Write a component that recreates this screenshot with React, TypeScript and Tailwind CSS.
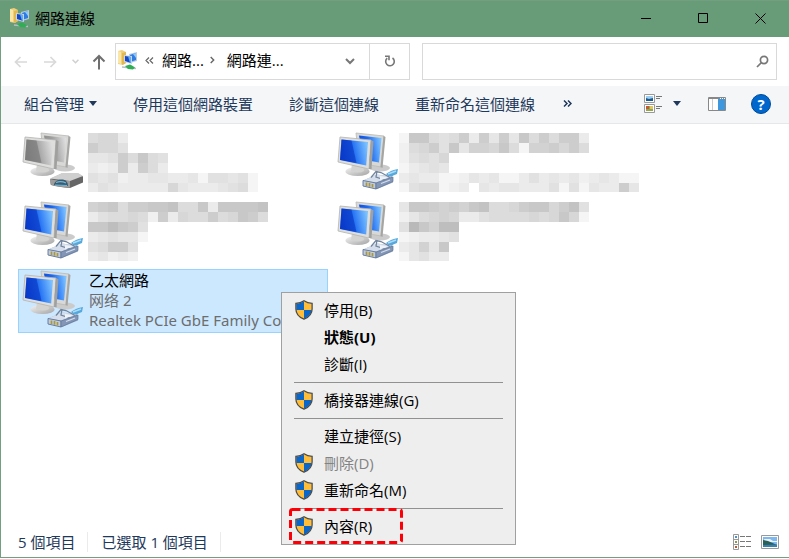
import type { ReactNode } from 'react'

type Connection = {
  id: string
  icon: 'modem' | 'ethernet'
  rows: string[]
  wide?: boolean
}

// Each character is the brightness of one 10px block.
const connections: Connection[] = [
  {
    id: 'a',
    icon: 'modem',
    rows: ['877b', '5779', 'aa958489', 'bcb5b58b', '9a9cbbaabbad99a9d', 'b9abbbbb7abbba98d'],
  },
  {
    id: 'b',
    icon: 'ethernet',
    wide: true,
    rows: ['d448985b5a5a485855b', 'c87594a66748d665758', 'c9897', 'dba9a', 'babbddcabaddb9babacbabdd', 'd988dcbfabaabbb9d9dabb5a'],
  },
  {
    id: 'c',
    icon: 'ethernet',
    rows: ['654855443884b44443', 'b98878c5b788587458', '442459', 'ba9aad', '98559', 'bacbc'],
  },
  {
    id: 'd',
    icon: 'ethernet',
    wide: true,
    rows: ['a445656438875447539', 'ca8767bb9888878747d', '914622', 'dcbba9', 'ba6a4', 'da9bb'],
  },
]

type MenuEntry = { label: string; shield?: boolean; bold?: boolean; disabled?: boolean }

const menuGroups: MenuEntry[][] = [
  [
    { label: '停用(B)', shield: true },
    { label: '狀態(U)', bold: true },
    { label: '診斷(I)' },
  ],
  [{ label: '橋接器連線(G)', shield: true }],
  [
    { label: '建立捷徑(S)' },
    { label: '刪除(D)', shield: true, disabled: true },
    { label: '重新命名(M)', shield: true },
  ],
  [{ label: '內容(R)', shield: true }],
]

function NetworkFolderIcon() {
  return (
    <svg viewBox="0 0 20 20" className="h-5 w-5 shrink-0">
      <path d="M0 1l4-1 4 2v11l-3 2-5-1z" fill="#efcf7c" />
      <path d="M0 1l3 1v12l-3-1z" fill="#fae6a8" />
      <path d="M4 3l4-1v11l-4 2z" fill="#e2b850" />
      <path d="M11 4l8-2v9l-7 2z" fill="#bccbdc" />
      <path d="M12 5l6-2v7l-6 2z" fill="#2f7be0" />
      <path d="M15 4l3-1v5z" fill="#8cc8ff" />
      <path d="M6 5l8 1v8l-8-2z" fill="#ccd6e2" />
      <path d="M7 6l6 1v6l-6-2z" fill="#1747c4" />
      <path d="M10 6.500l3 .5v6l-1-.3z" fill="#58b0ff" />
      <path d="M4 17l14 1.500" stroke="#b5bdc4" strokeWidth="1.500" />
      <path d="M7 16l5-1.500 2 1 3 2-2 2-5-.5z" fill="#2fae55" />
    </svg>
  )
}

function ShieldIcon() {
  return (
    <svg viewBox="0 0 18 20" className="h-5 w-[18px]">
      <path d="M9 1.200C6.500 2.900 4 3.500 1.300 3.600V10H9z" fill="#0a66c8" />
      <path d="M9 1.200c2.500 1.700 5 2.300 7.700 2.400V10H9z" fill="#ffbd38" />
      <path d="M1.300 10c.4 4 3.400 7 7.700 8.800V10z" fill="#ffbd38" />
      <path d="M16.700 10c-.4 4-3.400 7-7.700 8.800V10z" fill="#0a66c8" />
      <path d="M9 .8C6.500 2.500 3.800 3.200.9 3.300V9c0 4.800 3.100 8.200 8.100 10.200 5-2 8.100-5.400 8.100-10.200V3.300C14.200 3.200 11.500 2.500 9 .8z" fill="none" stroke="#4d4b45" strokeWidth="1.300" />
    </svg>
  )
}

function ConnectionIcon({ kind }: { kind: Connection['icon'] }) {
  const gray = kind === 'modem'
  const id = `screen-${kind}`
  return (
    <svg viewBox="0 1 62 62" className="h-[62px] w-[62px] shrink-0">
      <defs>
        <linearGradient id={id} x1="0" y1="0.600" x2="1" y2="0.400">
          <stop offset="0" stopColor={gray ? '#8b8b8b' : '#0b48dc'} />
          <stop offset="0.450" stopColor={gray ? '#a0a0a0' : '#1a68f2'} />
          <stop offset="1" stopColor={gray ? '#dedede' : '#7cc2ff'} />
        </linearGradient>
        <linearGradient id={`${id}-stand`} x1="0" y1="0" x2="1" y2="1">
          <stop offset="0" stopColor="#f4f4f4" />
          <stop offset="1" stopColor="#a2a2a2" />
        </linearGradient>
      </defs>
      <ellipse cx="43" cy="37" rx="10" ry="3.500" fill="#cbcbcb" />
      <path d="M19 2l28 3-3 31-22-4z" fill="#d8d8d6" stroke="#b9b9b7" strokeWidth=".8" />
      <path d="M22 4.500l22.500 2.500-2.500 24.500-16-3z" fill={`url(#${id})`} />
      <path d="M46.500 5l2 1-3 31-2-1z" fill="#a5a5a3" />
      <ellipse cx="20.500" cy="40.500" rx="12" ry="4.500" fill={`url(#${id}-stand)`} />
      <path d="M15 33l11 2 1 5q-6 3-13 0z" fill="#d3d3d2" />
      <path d="M3 6l31 3-2 29L1 31z" fill="#dededc" stroke="#b3b3b1" strokeWidth=".8" />
      <path d="M4.500 8.500l26.500 2.500-1.800 23.500L3 29z" fill={`url(#${id})`} />
      <path d="M4.500 8.500l10 1 5 22.500L3 28.700z" fill={gray ? '#6c6c6c' : '#0528b4'} opacity=".5" />
      <path d="M34 9l2.500 1.200-2 28.300-2.500-.5z" fill="#a0a09e" />
      {gray ? (
        <>
          <path d="M28 48l12-5.500h16l5 3v6l-13 5.500q-12-1-19-3z" fill="#666" />
          <path d="M28 47.500l12-5.500h16l5 3-13 5z" fill="#cfcfcf" />
          <path d="M28 48q8 2 20 2v6.500q-12-.5-19.500-3z" fill="#9d9d9d" />
          <path d="M32 53q2-5 9-4.500 5 1 5 6.500l-14-1z" fill="#3e5a6d" />
          <path d="M34 51.500q5-2 10 .5M33 54l12 .5" stroke="#6fb9dc" strokeWidth="1.200" fill="none" />
        </>
      ) : (
        <>
          <path d="M49 43q5-4 12-5l-1 5q-4 1-7 4z" fill="#57a9dc" />
          <path d="M51 43l8-3" stroke="#a9dcfb" strokeWidth="1.500" />
          <path d="M26 49.500l14-6 15 2 1 6L40 58l-14-3z" fill="#a3b3cc" />
          <path d="M26 49.500l14-6 14 2L39 51.500z" fill="#d5deea" />
          <path d="M26 49.500l13 2.500v6l-13-3z" fill="#c0cbdc" stroke="#5f7598" strokeWidth=".9" />
          <path d="M39 52l17-6v4.500L39 58z" fill="#8396b6" stroke="#5f7598" strokeWidth=".7" />
          <path d="M34 46.500l5-6 5 1 9 5M40 40l-1 6 9 3" fill="none" stroke="#72859f" strokeWidth="1.300" />
          <path d="M43 45l8 1.500-8 3z" fill="#eef3f8" />
          <path d="M44 52.500l9-3.500" stroke="#d5deea" strokeWidth="1.200" />
          <path d="M29.500 51.500v3.500M32.500 52v3.700M35.500 53v3.500" stroke="#ab983c" strokeWidth="1.700" />
        </>
      )}
    </svg>
  )
}

function Mosaic({ rows }: { rows: string[] }) {
  const width = Math.max(...rows.map((r) => r.length)) * 10
  return (
    <svg width={width} height="59" className="mt-px shrink-0" shapeRendering="crispEdges">
      {rows.flatMap((row, y) =>
        [...row].map((c, x) => {
          const v = 180 + parseInt(c, 16) * 5
          return <rect key={`${x}-${y}`} x={x * 10} y={y * 10} width="10" height="10" fill={`rgb(${v},${v},${v})`} />
        }),
      )}
    </svg>
  )
}

function Triangle() {
  return (
    <svg viewBox="0 0 8 5" className="h-[5px] w-2">
      <path d="M0 0h8L4 5z" fill="#1e395b" />
    </svg>
  )
}

function WindowButton({ label, children }: { label: string; children: ReactNode }) {
  return (
    <button aria-label={label} className="flex w-[57px] items-center justify-center">
      <svg viewBox="0 0 11 11" className="h-[11px] w-[11px]" fill="none" stroke="#000">
        {children}
      </svg>
    </button>
  )
}

function ContextMenu() {
  return (
    <div role="menu" className="absolute top-[292px] left-[281px] w-[235px] border border-[#a0a0a0] bg-[#eeeeee] py-1">
      {menuGroups.map((group, i) => (
        <div key={i}>
          {i > 0 && <div className="mx-3 my-1 h-px bg-[#919191]" />}
          {group.map((item) => (
            <button
              key={item.label}
              role="menuitem"
              disabled={item.disabled}
              className={`flex h-[27px] w-full items-center pb-[2px] pl-[13px] ${item.bold ? 'font-bold' : ''} ${item.disabled ? 'text-[#838383]' : 'text-black'}`}
            >
              <span className="w-[29px]">{item.shield && <ShieldIcon />}</span>
              {item.label}
            </button>
          ))}
        </div>
      ))}
      <svg viewBox="0 0 114 36" className="pointer-events-none absolute bottom-0 left-[7px] h-9 w-[114px]">
        <rect x="1.500" y="1.500" width="111" height="33" rx="2" fill="none" stroke="#fb0007" strokeWidth="3" strokeDasharray="8 4" />
      </svg>
    </div>
  )
}

export default function App() {
  return (
    <div className="relative flex min-h-screen flex-col bg-white pb-px font-['Open_Sans','Noto_Sans_CJK_TC',sans-serif] text-[15px] leading-5 text-black">
      <header className="flex h-[37px] shrink-0 justify-between border-t border-[#719f80] bg-[#689b78] pb-[2px]">
        <div className="flex items-center gap-[5px] pl-[10px]">
          <NetworkFolderIcon />
          <h1>網路連線</h1>
        </div>
        <div className="flex">
          <WindowButton label="最小化">
            <path d="M0 5.500h10" />
          </WindowButton>
          <WindowButton label="最大化">
            <path d="M.5.500h9v9h-9z" />
          </WindowButton>
          <WindowButton label="關閉">
            <path d="M.5.500l10 10M10.500.500l-10 10" />
          </WindowButton>
        </div>
      </header>

      <div className="flex flex-1 flex-col border-b border-l border-[#719f80]">
        <nav className="flex h-[49px] shrink-0 items-center pr-3 pl-[11px]">
          <button aria-label="上一頁" className="w-[30px]">
            <svg viewBox="0 0 14 12" className="ml-[2px] h-3 w-[14px]" fill="none" stroke="#d9d9d9" strokeWidth="1.700">
              <path d="M13 6H1.500M6.500 1l-5 5 5 5" />
            </svg>
          </button>
          <button aria-label="下一頁" className="w-[30px]">
            <svg viewBox="0 0 14 12" className="ml-[2px] h-3 w-[14px]" fill="none" stroke="#d9d9d9" strokeWidth="1.700">
              <path d="M0 6h11.500M6.500 1l5 5-5 5" />
            </svg>
          </button>
          <button aria-label="最近的位置" className="w-5">
            <svg viewBox="0 0 7 5" className="h-[5px] w-[7px]" fill="none" stroke="#d0d0d0" strokeWidth="1.600">
              <path d="M.5.700l3 3 3-3" />
            </svg>
          </button>
          <button aria-label="上一層" className="w-[23px]">
            <svg viewBox="0 0 14 16" className="h-4 w-[14px]" fill="none" stroke="#6f6f6f" strokeWidth="2">
              <path d="M7 15.500V2M1.500 7.500L7 2l5.500 5.500" />
            </svg>
          </button>

          <div className="flex h-[37px] w-[295px] shrink-0 border border-[#d9d9d9]">
            <div className="flex flex-1 items-center pb-[3px] pl-[2px]">
              <NetworkFolderIcon />
              <svg viewBox="0 0 9 7" className="ml-[7px] h-[7px] w-[9px]" fill="none" stroke="#666" strokeWidth="1.200">
                <path d="M4 .5l-3 3 3 3M8 .5l-3 3 3 3" />
              </svg>
              <button className="ml-2">網路...</button>
              <svg viewBox="0 0 5 8" className="ml-[6px] h-2 w-[5px]" fill="none" stroke="#666" strokeWidth="1.400">
                <path d="M.7 1l3 3-3 3" />
              </svg>
              <button className="ml-3">網路連...</button>
            </div>
            <button aria-label="先前的位置" className="flex w-[38px] items-center justify-center">
              <svg viewBox="0 0 10 7" className="h-[7px] w-[10px]" fill="none" stroke="#777" strokeWidth="2">
                <path d="M1 1l4 4 4-4" />
              </svg>
            </button>
            <button aria-label="重新整理" className="flex w-10 items-center justify-center border-l border-[#d9d9d9] pb-[2px]">
              <svg viewBox="0 0 12 12" className="h-3 w-3" fill="none" stroke="#777" strokeWidth="1.600">
                <path d="M8.500 3A4.300 4.300 0 1 1 3.200 3.200M1 1.300h4v4" />
              </svg>
            </button>
          </div>

          <label className="ml-3 flex h-[37px] flex-1 items-center border border-[#d9d9d9] pr-[7px]">
            <input type="text" aria-label="搜尋" className="w-0 flex-1 self-stretch bg-transparent px-2 outline-none" />
            <svg viewBox="0 0 13 13" className="h-[13px] w-[13px]" fill="none" stroke="#777" strokeWidth="1.700">
              <circle cx="8" cy="5" r="3.600" />
              <path d="M5.500 7.500L1 12" />
            </svg>
          </label>
        </nav>

        <div className="flex h-[38px] shrink-0 items-center border-b border-[#e6e7e8] bg-[#f5f6f8] pr-[18px] pb-[2px] pl-[23px] text-[#1e395b]">
          <button className="flex items-center gap-[5px]">
            組合管理
            <Triangle />
          </button>
          <button className="ml-9">停用這個網路裝置</button>
          <button className="ml-9">診斷這個連線</button>
          <button className="ml-9">重新命名這個連線</button>
          <button aria-label="更多" className="ml-7">
            <svg viewBox="0 0 9 7" className="h-[7px] w-[9px]" fill="none" stroke="#1e395b" strokeWidth="1.500">
              <path d="M1 .5l3 3-3 3M5 .5l3 3-3 3" />
            </svg>
          </button>
          <button aria-label="變更檢視" className="ml-auto flex items-center gap-[11px]">
            <svg viewBox="0 0 18 19" className="h-[19px] w-[18px]">
              <path d="M.5.500h10v8h-10zM.5 10.500h10v8h-10z" fill="#fff" stroke="#999" />
              <path d="M2 2h7v5H2z" fill="#9ccdf2" />
              <path d="M2 4l3 1 4-1v3H2z" fill="#1c5a8c" />
              <path d="M2 12h7v5H2z" fill="#8bab4e" />
              <path d="M2 12h3v3H2z" fill="#cf5136" />
              <path d="M6 12h3v3H6z" fill="#e4c558" />
              <path d="M12 2.500h6M12 4.500h4M12 12.500h6M12 14.500h4" stroke="#777" />
            </svg>
            <Triangle />
          </button>
          <button aria-label="預覽窗格" className="ml-[27px]">
            <svg viewBox="0 0 18 14" className="h-[14px] w-[18px]">
              <path d="M.5.500h17v13H.5z" fill="#fff" stroke="#888" />
              <path d="M1 1h16v1H1z" fill="#888" />
              <path d="M4.500 2v11" stroke="#ccc" />
              <path d="M10 2h7v11h-7z" fill="#3f97dd" />
              <path d="M12 1.500h1M14 1.500h1M16 1.500h1" stroke="#fff" />
            </svg>
          </button>
          <button aria-label="說明" className="ml-[25px] flex h-5 w-5 items-center justify-center rounded-full border border-[#004a9a] bg-[#0067cc] font-bold text-white">
            ?
          </button>
        </div>

        <main className="flex-1 px-[17px] pt-[7px]">
          <div className="grid grid-cols-[310px_310px] gap-[5px]">
            {connections.map((c) => (
              <div key={c.id} className={`flex h-16 border border-transparent pl-[3px] ${c.wide ? '' : 'gap-1'}`}>
                <ConnectionIcon kind={c.icon} />
                <Mosaic rows={c.rows} />
              </div>
            ))}
            <div className="flex h-16 gap-[5px] border border-[#99d1ff] bg-[#cce8ff] pl-[3px]">
              <ConnectionIcon kind="ethernet" />
              <div className="font-['Noto_Sans','Noto_Sans_CJK_TC',sans-serif] whitespace-nowrap text-[#6d6d6d]">
                <p className="text-black">乙太網路</p>
                <p>网络 2</p>
                <p>Realtek PCIe GbE Family Contr...</p>
              </div>
            </div>
          </div>
        </main>

        <footer className="flex h-[30px] shrink-0 items-center pr-[10px] pl-[17px] text-[#1e395b]">
          <span className="border-r border-[#ebebeb] pr-3">5 個項目</span>
          <span className="ml-[13px] border-r border-[#ebebeb] pr-3">已選取 1 個項目</span>
          <button aria-label="詳細資料" className="ml-auto">
            <svg viewBox="0 0 18 16" className="h-4 w-[18px]">
              <path d="M.5.500h5v15h-5zM.5 5.500h5M.5 10.500h5" fill="#fff" stroke="#999" />
              <path d="M2 2h2v2H2z" fill="#4a8fd0" />
              <path d="M2 7h2v2H2z" fill="#8a9a48" />
              <path d="M2 12h2v2H2z" fill="#c0562d" />
              <path d="M7 2.500h5M13 2.500h5M7 7.500h5M13 7.500h5M7 12.500h5M13 12.500h5" stroke="#777" />
            </svg>
          </button>
          <button aria-label="大圖示" className="ml-[10px]">
            <svg viewBox="0 0 18 14" className="h-[14px] w-[18px]">
              <path d="M.5.500h17v13H.5z" fill="#fff" stroke="#999" />
              <path d="M2 2h14v10H2z" fill="#7db8ee" />
              <path d="M3 4h6l3 2h4v1H4z" fill="#e8f3fb" />
              <path d="M2 5l5 1 9 4v1H2z" fill="#2a5f57" />
              <path d="M2 10l14-.5V12H2z" fill="#3b7fae" />
            </svg>
          </button>
        </footer>
      </div>

      <ContextMenu />
    </div>
  )
}
